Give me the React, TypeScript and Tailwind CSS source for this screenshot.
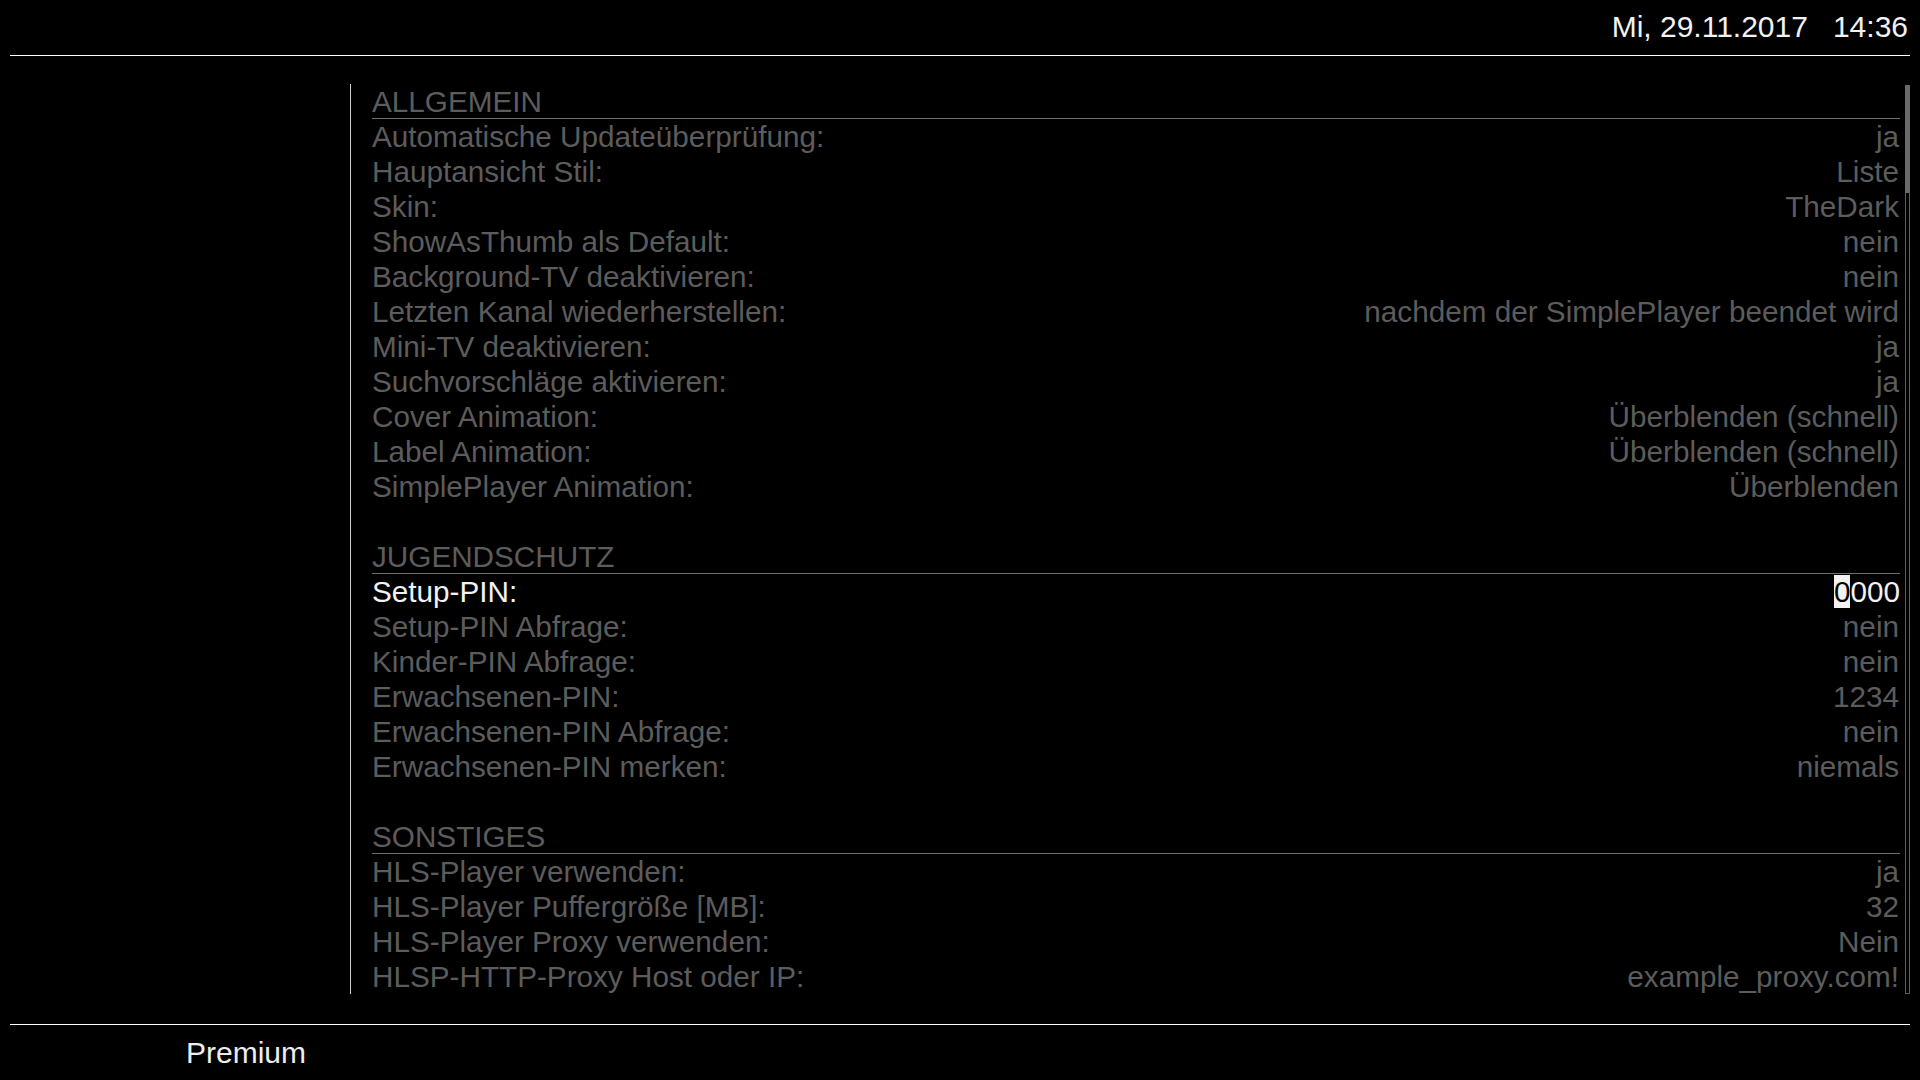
import React from "react";

type Row = { label: string; value: string; active?: boolean };
type Section = { title: string; rows: Row[] };

const sections: Section[] = [
  {
    title: "ALLGEMEIN",
    rows: [
      { label: "Automatische Updateüberprüfung:", value: "ja" },
      { label: "Hauptansicht Stil:", value: "Liste" },
      { label: "Skin:", value: "TheDark" },
      { label: "ShowAsThumb als Default:", value: "nein" },
      { label: "Background-TV deaktivieren:", value: "nein" },
      { label: "Letzten Kanal wiederherstellen:", value: "nachdem der SimplePlayer beendet wird" },
      { label: "Mini-TV deaktivieren:", value: "ja" },
      { label: "Suchvorschläge aktivieren:", value: "ja" },
      { label: "Cover Animation:", value: "Überblenden (schnell)" },
      { label: "Label Animation:", value: "Überblenden (schnell)" },
      { label: "SimplePlayer Animation:", value: "Überblenden" },
    ],
  },
  {
    title: "JUGENDSCHUTZ",
    rows: [
      { label: "Setup-PIN:", value: "0000", active: true },
      { label: "Setup-PIN Abfrage:", value: "nein" },
      { label: "Kinder-PIN Abfrage:", value: "nein" },
      { label: "Erwachsenen-PIN:", value: "1234" },
      { label: "Erwachsenen-PIN Abfrage:", value: "nein" },
      { label: "Erwachsenen-PIN merken:", value: "niemals" },
    ],
  },
  {
    title: "SONSTIGES",
    rows: [
      { label: "HLS-Player verwenden:", value: "ja" },
      { label: "HLS-Player Puffergröße [MB]:", value: "32" },
      { label: "HLS-Player Proxy verwenden:", value: "Nein" },
      { label: "HLSP-HTTP-Proxy Host oder IP:", value: "example_proxy.com!" },
    ],
  },
];

export default function App() {
  return (
    <div className="w-[1920px] h-[1080px] bg-black overflow-hidden font-['Liberation_Sans',Arial,sans-serif]">
      <header className="h-[56px] mx-[10px] border-b border-white flex justify-end items-start pt-[10px] pr-[2px] text-[30px] leading-[34px] text-[#f2f2f2]">
        <span>Mi, 29.11.2017</span>
        <span className="ml-[25px]">14:36</span>
      </header>

      <main className="h-[968px] flex pt-[28px]">
        <div className="w-[350px] shrink-0" />
        <div className="w-[1550px] h-[910px] border-l border-[#cfcfcf] pl-[21px] flex flex-col text-[29.7px] leading-[35px] text-[#5c5c5c]">
          {sections.map((s, si) => (
            <div key={s.title} className="flex flex-col">
              {si > 0 && <div className="h-[35px]" />}
              <div className="h-[35px] border-b border-[#6e6e6e]">{s.title}</div>
              {s.rows.map((r) => (
                <div
                  key={r.label}
                  className={`h-[35px] flex justify-between items-center ${r.active ? "text-[#f2f2f2]" : ""}`}
                >
                  <span>{r.label}</span>
                  {r.active ? (
                    <span className="flex items-center">
                      <span className="inline-block bg-[#f2f2f2] text-black leading-[33px]">0</span>
                      <span>000</span>
                    </span>
                  ) : (
                    <span className="pr-[1px]">{r.value}</span>
                  )}
                </div>
              ))}
            </div>
          ))}
        </div>
        <div className="ml-[5px] mt-[1px] w-[5px] h-[909px] border border-[#5e5e5e] flex flex-col">
          <div className="h-[108px] bg-[#6a6a6a] -mx-[1px] -mt-[1px]" />
        </div>
      </main>

      <footer className="h-[56px] mx-[10px] border-t border-white flex items-center pl-[176px] text-[30px] text-[#ededed]">
        Premium
      </footer>
    </div>
  );
}
